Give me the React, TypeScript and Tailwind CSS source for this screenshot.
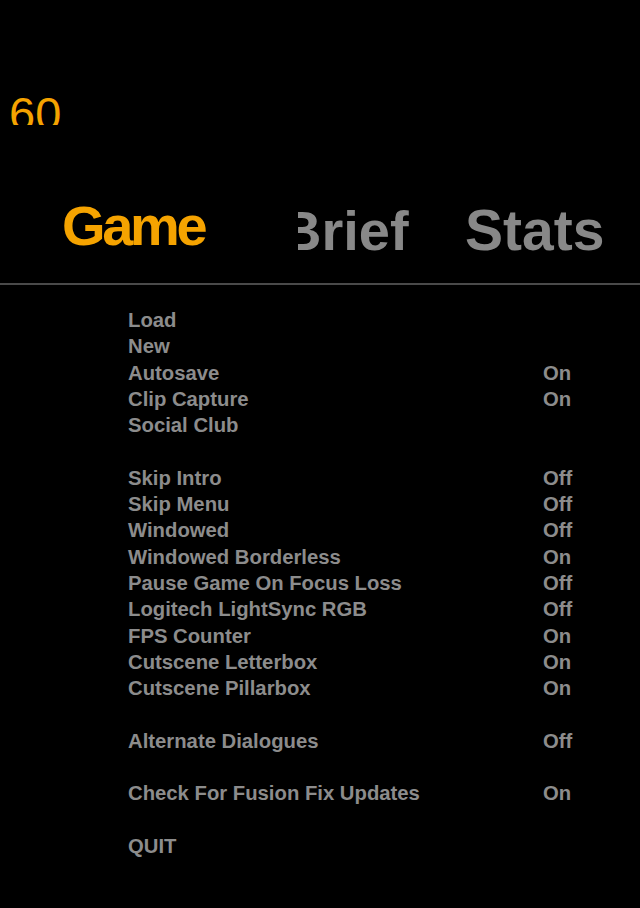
import React from "react";

const groups: [string, string][][] = [
  [
    ["Load", ""],
    ["New", ""],
    ["Autosave", "On"],
    ["Clip Capture", "On"],
    ["Social Club", ""],
  ],
  [
    ["Skip Intro", "Off"],
    ["Skip Menu", "Off"],
    ["Windowed", "Off"],
    ["Windowed Borderless", "On"],
    ["Pause Game On Focus Loss", "Off"],
    ["Logitech LightSync RGB", "Off"],
    ["FPS Counter", "On"],
    ["Cutscene Letterbox", "On"],
    ["Cutscene Pillarbox", "On"],
  ],
  [["Alternate Dialogues", "Off"]],
  [["Check For Fusion Fix Updates", "On"]],
  [["QUIT", ""]],
];

export default function App() {
  return (
    <div
      className="w-[640px] h-[908px] bg-black overflow-hidden"
      style={{ fontFamily: '"Liberation Sans", Arial, sans-serif' }}
    >
      <div className="h-[125px] overflow-hidden pl-[9px]">
        <div className="pt-[91px] text-[47px] leading-[46px] text-[#f5a300]">60</div>
      </div>
      <div className="h-[158px] flex font-bold text-[56px] leading-[56px] text-[#888888]">
        <div className="w-[298px] shrink-0 pl-[62px] pt-[73px] text-[#f5a300] tracking-[-0.06em] whitespace-nowrap">
          Game
        </div>
        <div className="w-[165px] shrink-0 overflow-hidden pt-[78px] whitespace-nowrap">
          <div className="-ml-[17px]">Brief</div>
        </div>
        <div className="flex-1 pl-[2px] pt-[77px] text-[57px] leading-[57px] whitespace-nowrap">Stats</div>
      </div>
      <div className="h-[2px] bg-[#4a4a4a]" />
      <div className="pt-[22px] pl-[128px] pr-[40px] font-bold text-[20.3px] text-[#8c8c8c]">
        {groups.map((g, gi) => (
          <div key={gi} className={gi > 0 ? "pt-[26.3px]" : ""}>
            {g.map(([label, val]) => (
              <div key={label} className="h-[26.3px] leading-[26.3px] flex whitespace-nowrap">
                <div className="w-[415px] shrink-0">{label}</div>
                <div>{val}</div>
              </div>
            ))}
          </div>
        ))}
      </div>
    </div>
  );
}
